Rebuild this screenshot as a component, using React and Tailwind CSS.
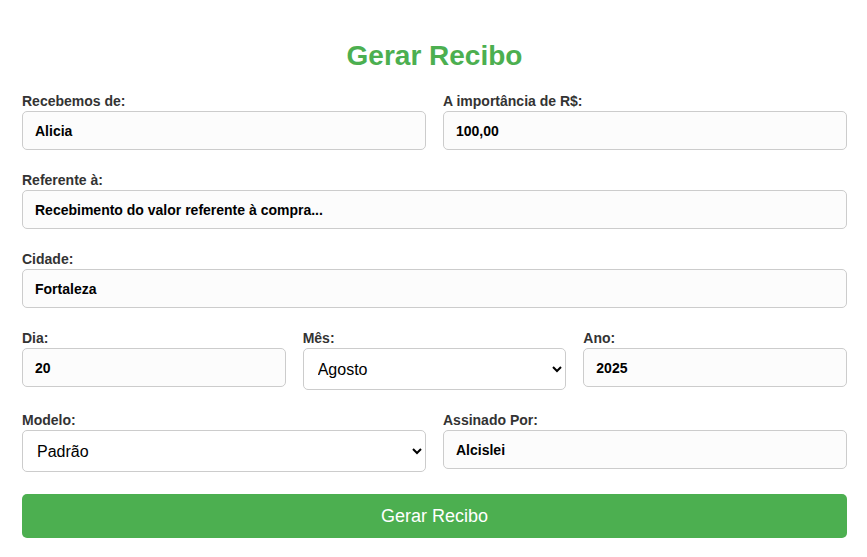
import React from "react";

const font = { fontFamily: '"Liberation Sans", Arial, sans-serif' };

function Field({ label, value }) {
  return (
    <div className="flex flex-col">
      <label className="block text-[14px] leading-[16px] font-bold text-[#333] mb-[2px]">{label}</label>
      <input
        readOnly
        value={value}
        style={font}
        className="h-[39px] w-full rounded-[5px] border border-[#cccccc] bg-[#fcfcfc] px-[12px] text-[14px] font-bold text-black outline-none"
      />
    </div>
  );
}

function SelectField({ label, value, options }) {
  return (
    <div className="flex flex-col">
      <label className="block text-[14px] leading-[16px] font-bold text-[#333] mb-[2px]">{label}</label>
      <select
        defaultValue={value}
        className="h-[42px] w-full rounded-[5px] border border-[#cccccc] bg-white px-[10px] text-[16px] text-black outline-none"
        style={font}
      >
        {options.map((o) => (
          <option key={o}>{o}</option>
        ))}
      </select>
    </div>
  );
}

export default function App() {
  const meses = ["Janeiro", "Fevereiro", "Março", "Abril", "Maio", "Junho", "Julho", "Agosto", "Setembro", "Outubro", "Novembro", "Dezembro"];
  return (
    <div className="min-h-[557px] bg-white" style={font}>
      <div className="px-[22px] pr-[20px] pt-[40px] pb-[19px]">
        <h2 className="text-center text-[28px] leading-[32px] font-bold text-[#4caf50] mb-[21px]">Gerar Recibo</h2>
        <div className="flex flex-col gap-[22px]">
          <div className="grid grid-cols-2 gap-[17px] items-start">
            <Field label="Recebemos de:" value="Alicia" />
            <Field label="A importância de R$:" value="100,00" />
          </div>
          <Field label="Referente à:" value="Recebimento do valor referente à compra..." />
          <Field label="Cidade:" value="Fortaleza" />
          <div className="grid grid-cols-3 gap-[17px] items-start">
            <Field label="Dia:" value="20" />
            <SelectField label="Mês:" value="Agosto" options={meses} />
            <Field label="Ano:" value="2025" />
          </div>
          <div className="grid grid-cols-2 gap-[17px] items-start">
            <SelectField label="Modelo:" value="Padrão" options={["Padrão", "Simples"]} />
            <Field label="Assinado Por:" value="Alcislei" />
          </div>
          <button style={font} className="h-[44px] w-full rounded-[5px] bg-[#4caf50] text-[18px] text-white">Gerar Recibo</button>
        </div>
      </div>
    </div>
  );
}
